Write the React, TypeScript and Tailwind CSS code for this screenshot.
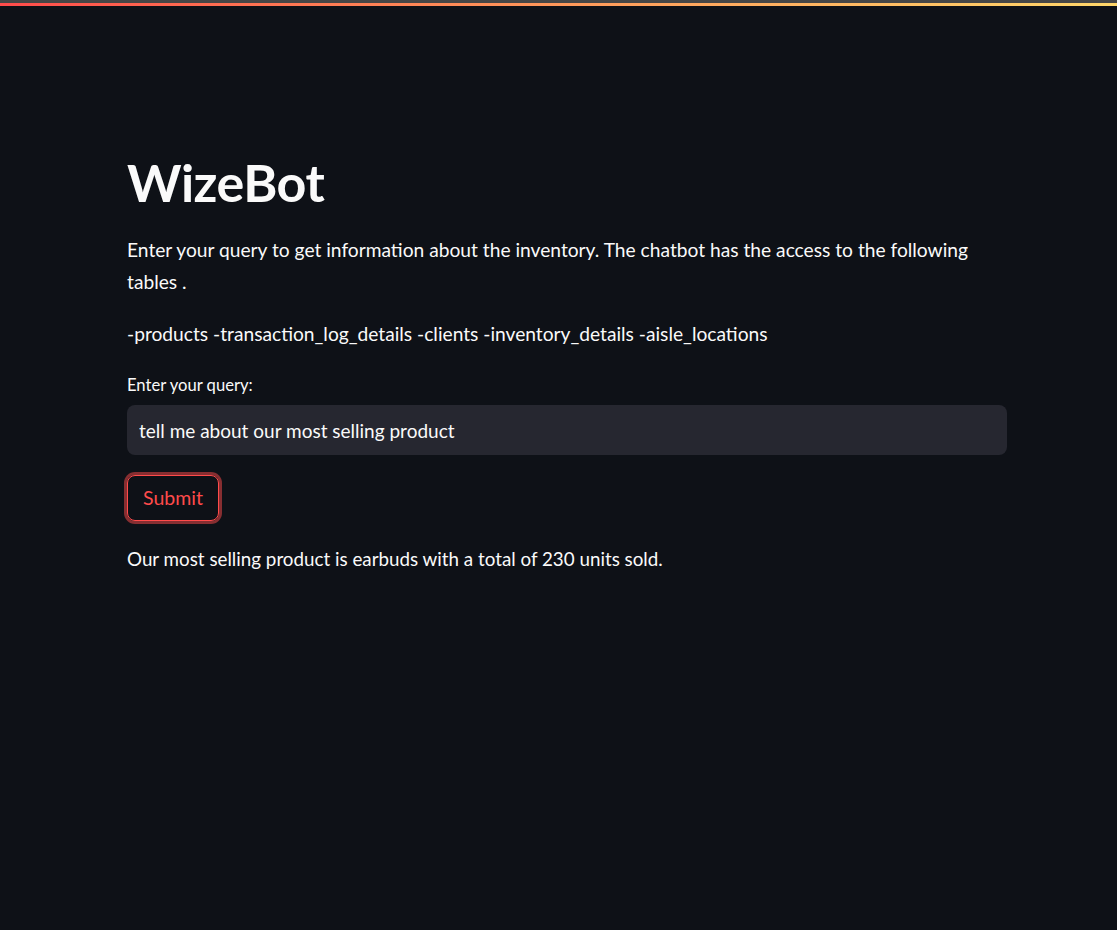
import { useState } from "react";

const App = () => {
	const [query, setQuery] = useState("tell me about our most selling product");

	return (
		<div className="min-h-[930px] w-full bg-[#0e1117] font-['Lato','Noto_Sans',sans-serif] text-[#fafafa]">
			<div className="h-[3px] w-full bg-[#464646]" />
			<div className="h-[3px] w-full bg-gradient-to-r from-[#ff4b4b] to-[#ffd76a]" />
			<main className="ml-[127px] w-[880px] pt-[140px]">
				<h1 className="text-[52px] font-bold leading-[72px] tracking-[-0.5px]">WizeBot</h1>
				<div className="mt-[16px] flex flex-col gap-[20px] text-[19.2px] leading-[32px]">
					<p>
						Enter your query to get information about the inventory. The chatbot has the access to the following tables .
					</p>
					<p>-products -transaction_log_details -clients -inventory_details -aisle_locations</p>
				</div>
				<label className="mt-[23px] block text-[16.6px] leading-[24px]">Enter your query:</label>
				<input
					type="text"
					value={query}
					onChange={(e) => setQuery(e.target.value)}
					className="mt-[8px] block h-[50px] w-[880px] rounded-[8px] bg-[#262730] px-[12px] text-[19px] text-[#fafafa] outline-none"
				/>
				<button
					type="button"
					className="mt-[20px] h-[46px] rounded-[8px] border border-[#ff4b4b] px-[15px] text-[19.5px] text-[#ff4b4b] shadow-[0_0_0_3px_rgba(255,75,75,0.5)]"
				>
					Submit
				</button>
				<p className="mt-[22px] text-[18.8px] leading-[32px]">
					Our most selling product is earbuds with a total of 230 units sold.
				</p>
			</main>
		</div>
	);
};

export default App;
